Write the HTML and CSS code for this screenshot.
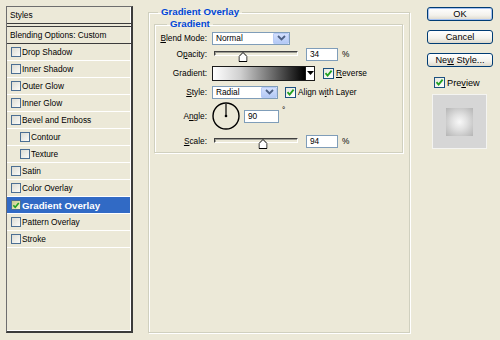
FILE: index.html
```html
<!DOCTYPE html>
<html>
<head>
  <title>Layer Style</title>
  <link rel="stylesheet" href="styles.css">
</head>
<body>
  <div class="dialog">
    <div class="styles-panel">
      <div class="panel-head">Styles</div>
      <div class="panel-blend">Blending Options: Custom</div>
      <div class="item"><span class="check"></span>Drop Shadow</div>
      <div class="item"><span class="check"></span>Inner Shadow</div>
      <div class="item"><span class="check"></span>Outer Glow</div>
      <div class="item"><span class="check"></span>Inner Glow</div>
      <div class="item"><span class="check"></span>Bevel and Emboss</div>
      <div class="item sub"><span class="check"></span>Contour</div>
      <div class="item sub"><span class="check"></span>Texture</div>
      <div class="item"><span class="check"></span>Satin</div>
      <div class="item"><span class="check"></span>Color Overlay</div>
      <div class="item selected"><span class="check checked"><svg viewBox="0 0 9 9" width="9" height="9"><polyline points="1.5,4.2 3.6,6.6 7.6,1.6" fill="none" stroke="#21a121" stroke-width="1.8"/></svg></span>Gradient Overlay</div>
      <div class="item"><span class="check"></span>Pattern Overlay</div>
      <div class="item"><span class="check"></span>Stroke</div>
    </div>

    <fieldset class="group outer">
      <legend>Gradient Overlay</legend>
      <fieldset class="group inner">
        <legend>Gradient</legend>

        <div class="row r1">
          <label class="lbl"><u>B</u>lend Mode:</label>
          <div class="select blend">
            <span class="select-text">Normal</span>
            <span class="drop"><svg viewBox="0 0 9 6" width="9" height="6"><polyline points="1,1 4.5,4.5 8,1" fill="none" stroke="#4d6185" stroke-width="1.8"/></svg></span>
          </div>
        </div>

        <div class="row r2">
          <label class="lbl">O<u>p</u>acity:</label>
          <div class="slider">
            <div class="track"></div>
            <svg class="thumb" style="left: 34%" viewBox="0 0 9 10" width="9" height="10"><polygon points="0.5,9.5 0.5,4.5 4.5,0.5 8.5,4.5 8.5,9.5" fill="#fff" stroke="#000"/></svg>
          </div>
          <div class="field num">34</div>
          <span class="unit">%</span>
        </div>

        <div class="row r3">
          <label class="lbl">Gradient:</label>
          <div class="gradient"></div>
          <div class="grad-arrow"><svg viewBox="0 0 7 4" width="7" height="4"><polygon points="0,0 7,0 3.5,4" fill="#000"/></svg></div>
          <span class="check big checked rev"><svg viewBox="0 0 9 9" width="9" height="9"><polyline points="1.5,4.2 3.6,6.6 7.6,1.6" fill="none" stroke="#21a121" stroke-width="1.8"/></svg></span>
          <span class="check-label"><u>R</u>everse</span>
        </div>

        <div class="row r4">
          <label class="lbl"><u>S</u>tyle:</label>
          <div class="select style">
            <span class="select-text">Radial</span>
            <span class="drop"><svg viewBox="0 0 9 6" width="9" height="6"><polyline points="1,1 4.5,4.5 8,1" fill="none" stroke="#4d6185" stroke-width="1.8"/></svg></span>
          </div>
          <span class="check big checked align"><svg viewBox="0 0 9 9" width="9" height="9"><polyline points="1.5,4.2 3.6,6.6 7.6,1.6" fill="none" stroke="#21a121" stroke-width="1.8"/></svg></span>
          <span class="check-label">Align w<u>i</u>th Layer</span>
        </div>

        <div class="row r5">
          <label class="lbl">A<u>n</u>gle:</label>
          <svg class="dial" viewBox="0 0 28 28" width="28" height="28">
            <circle cx="14" cy="14" r="13" fill="none" stroke="#000" stroke-width="1.4"/>
            <line x1="14" y1="14" x2="14" y2="2" stroke="#000" stroke-width="1.2"/>
            <circle cx="14" cy="14" r="1.3" fill="#000"/>
          </svg>
          <div class="field angle">90</div>
          <span class="deg">°</span>
        </div>

        <div class="row r6">
          <label class="lbl"><u>S</u>cale:</label>
          <div class="slider">
            <div class="track"></div>
            <svg class="thumb" style="left: 58%" viewBox="0 0 9 10" width="9" height="10"><polygon points="0.5,9.5 0.5,4.5 4.5,0.5 8.5,4.5 8.5,9.5" fill="#fff" stroke="#000"/></svg>
          </div>
          <div class="field num">94</div>
          <span class="unit">%</span>
        </div>
      </fieldset>
    </fieldset>

    <div class="side">
      <button class="btn default">OK</button>
      <button class="btn">Cancel</button>
      <button class="btn">Ne<u>w</u> Style...</button>
      <div class="preview-row">
        <span class="check big checked"><svg viewBox="0 0 9 9" width="9" height="9"><polyline points="1.5,4.2 3.6,6.6 7.6,1.6" fill="none" stroke="#21a121" stroke-width="1.8"/></svg></span>
        <span class="preview-label">Pre<u>v</u>iew</span>
      </div>
      <div class="preview">
        <div class="swatch"></div>
      </div>
    </div>
  </div>
</body>
</html>
```

FILE: styles.css
```css
html,
body {
  margin: 0;
  background-color: #ece9d8;
}

body {
  width: 500px;
  height: 340px;
  font-family: "Liberation Sans", Arial, sans-serif;
  font-size: 8.3px;
  color: #000;
  overflow: hidden;
}

.dialog {
  display: flex;
  align-items: flex-start;
  padding: 6px 0 0 6px;
}

/* left list */
.styles-panel {
  box-sizing: border-box;
  width: 127px;
  height: 327px;
  border: 1px solid #6e6e6e;
  border-right: 2px solid #3c3c3c;
  border-bottom: 2px solid #3c3c3c;
  box-shadow: inset -1px -1px 0 #fff;
}

.panel-head {
  height: 16px;
  line-height: 16px;
  padding-left: 3px;
  border-bottom: 4px double #3c3c3c;
}

.panel-blend {
  height: 16px;
  line-height: 16px;
  padding-left: 3px;
  border-bottom: 1px solid #3c3c3c;
}

.item {
  display: flex;
  align-items: center;
  height: 16px;
  padding-left: 4px;
  margin-right: 1px;
  border-bottom: 1px solid #fff;
}

.item.sub {
  padding-left: 13px;
}

.item .check {
  margin-right: 1px;
}

.item.selected {
  background-color: #316ac5;
  color: #fff;
  font-weight: bold;
  font-size: 9.7px;
}

.check {
  box-sizing: border-box;
  display: inline-flex;
  align-items: center;
  justify-content: center;
  flex: none;
  width: 10px;
  height: 10px;
  border: 1px solid #4c6f93;
  background: linear-gradient(135deg, #dcdcd4, #fbfbf8);
}

.check.big {
  width: 11px;
  height: 11px;
  border-color: #1c5180;
}

.check.checked {
  background: linear-gradient(135deg, #e7e7df, #fff);
}

.selected .check.checked {
  background: linear-gradient(135deg, #c9c98a, #f3f3c8);
}

/* group boxes */
.group {
  box-sizing: border-box;
  margin: 0;
  padding: 0;
  min-width: 0;
  border: 1px solid #d0d0bf;
  box-shadow: inset 1px 1px 0 #fff, 1px 1px 0 #fff;
}

.group legend {
  padding: 0 3px;
  line-height: 12px;
  font-size: 9.7px;
  font-weight: bold;
  color: #0046d5;
}

.outer {
  width: 262px;
  height: 327px;
  margin-left: 15px;
  padding-left: 5px;
}

.outer > legend {
  margin-left: 4px;
}

.inner {
  width: 249px;
  padding-bottom: 2px;
}

.inner > legend {
  margin-left: 12px;
}

.row {
  display: flex;
  align-items: center;
}

.r1 { height: 16px; }
.r2 { height: 16px; }
.r3 { height: 22px; }
.r4 { height: 16px; }
.r5 { height: 32px; }
.r6 { height: 18px; }

.lbl {
  width: 52px;
  margin-right: 5px;
  text-align: right;
  flex: none;
}

.select {
  box-sizing: border-box;
  display: flex;
  align-items: stretch;
  height: 13px;
  border: 1px solid #7f9db9;
  background-color: #fff;
}

.select.blend { width: 78px; }
.select.style { width: 66px; }

.select-text {
  flex: 1;
  padding-left: 3px;
  line-height: 11px;
}

.drop {
  display: flex;
  align-items: center;
  justify-content: center;
  width: 14px;
  margin: 0;
  border: 1px solid #b8cbf6;
  border-radius: 1px;
  background: linear-gradient(#d3e0fd, #b4c9f5);
}

.slider {
  position: relative;
  width: 84px;
  height: 14px;
  margin-left: 2px;
}

.track {
  box-sizing: border-box;
  height: 5px;
  margin-top: 4px;
  border: 1px solid;
  border-color: #404040 #fff #fff #404040;
  background-color: #ece9d8;
  box-shadow: inset 1px 1px 0 #9d9d94;
}

.thumb {
  position: absolute;
  top: 5px;
  transform: translateX(-50%);
}

.field {
  box-sizing: border-box;
  height: 13px;
  line-height: 11px;
  padding-left: 3px;
  border: 1px solid #7f9db9;
  background-color: #fff;
}

.field.num {
  width: 32px;
  margin-left: 8px;
}

.unit {
  margin-left: 4px;
}

.gradient {
  box-sizing: border-box;
  width: 94px;
  height: 15px;
  border: 1px solid #1a1a1a;
  background: linear-gradient(to right, #fff 0%, #cfcfcf 30%, #6a6a6a 65%, #000 100%);
}

.grad-arrow {
  box-sizing: border-box;
  display: flex;
  align-items: center;
  justify-content: center;
  width: 9px;
  height: 15px;
  border: 1px solid #1a1a1a;
  border-left: none;
  background-color: #fff;
}

.check.rev {
  margin-left: 8px;
}

.check.align {
  margin-left: 7px;
}

.check-label {
  margin-left: 2px;
}

.dial {
  flex: none;
}

.field.angle {
  width: 35px;
  margin-left: 4px;
}

.deg {
  align-self: flex-start;
  margin: 5px 0 0 3px;
}

/* right column */
.side {
  width: 66px;
  margin-left: 17px;
  padding-top: 1px;
}

.btn {
  box-sizing: border-box;
  display: block;
  width: 66px;
  height: 14px;
  margin: 0 0 9px;
  padding: 0;
  font-family: inherit;
  font-size: 9.2px;
  line-height: 12px;
  color: #000;
  border: 1px solid #003c74;
  border-radius: 3px;
  background: linear-gradient(#fff, #f3f2ec 60%, #dcd8cb);
}

.btn.default {
  box-shadow: inset 0 0 0 1px #a6c2f1;
}

.preview-row {
  display: flex;
  align-items: center;
  height: 11px;
  margin: 10px 0 0 7px;
}

.preview-label {
  margin-left: 2px;
  font-size: 9.2px;
}

.preview {
  box-sizing: border-box;
  display: flex;
  align-items: center;
  justify-content: center;
  width: 55px;
  height: 55px;
  margin: 6px 0 0 5px;
  border: 1px solid #f4f4f1;
  background-color: #d6d6d6;
}

.swatch {
  width: 27px;
  height: 28px;
  background: radial-gradient(circle, #f8f8f8 0%, #e0e0e0 40%, #b4b4b4 100%);
}
```
